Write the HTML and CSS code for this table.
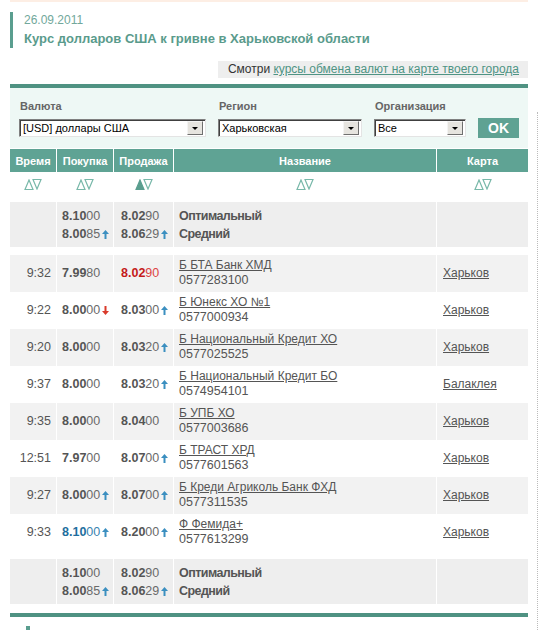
FILE: index.html
```html
<!DOCTYPE html>
<html>
<head>
<meta charset="utf-8">
<link rel="stylesheet" href="styles.css">
</head>
<body>
<div class="page">
  <div class="main">
    <div class="strip"></div>
    <div class="heading">
      <div class="date">26.09.2011</div>
      <h1 class="title">Курс долларов США к гривне в Харьковской области</h1>
    </div>
    <div class="seebar"><span class="see">Смотри <a href="#">курсы обмена валют на карте твоего города</a></span></div>
    <div class="topbar"></div>
    <div class="filters">
      <div class="field">
        <label>Валюта</label>
        <div class="select w-cur"><span>[USD] доллары США</span><i class="dd"></i></div>
      </div>
      <div class="field">
        <label>Регион</label>
        <div class="select w-reg"><span>Харьковская</span><i class="dd"></i></div>
      </div>
      <div class="field">
        <label>Организация</label>
        <div class="select w-org"><span>Все</span><i class="dd"></i></div>
      </div>
      <button class="ok">OK</button>
    </div>
    <table class="rates">
      <colgroup>
        <col class="k1"><col class="k2"><col class="k3"><col class="k4"><col class="k5">
      </colgroup>
      <thead>
        <tr><th>Время</th><th>Покупка</th><th>Продажа</th><th>Название</th><th>Карта</th></tr>
      </thead>
      <tbody>
        <tr class="sort">
          <td><svg class="srt" width="18" height="11" viewBox="0 0 18 11"><path d="M1 10.5 L5 1 L9 10.5 Z"/><path d="M9 0.5 L17 0.5 L13 10 Z"/></svg></td>
          <td><svg class="srt" width="18" height="11" viewBox="0 0 18 11"><path d="M1 10.5 L5 1 L9 10.5 Z"/><path d="M9 0.5 L17 0.5 L13 10 Z"/></svg></td>
          <td><svg class="srt" width="18" height="11" viewBox="0 0 18 11"><path class="on" d="M1 10.5 L5 1 L9 10.5 Z"/><path d="M9 0.5 L17 0.5 L13 10 Z"/></svg></td>
          <td><svg class="srt" width="18" height="11" viewBox="0 0 18 11"><path d="M1 10.5 L5 1 L9 10.5 Z"/><path d="M9 0.5 L17 0.5 L13 10 Z"/></svg></td>
          <td><svg class="srt" width="18" height="11" viewBox="0 0 18 11"><path d="M1 10.5 L5 1 L9 10.5 Z"/><path d="M9 0.5 L17 0.5 L13 10 Z"/></svg></td>
        </tr>
        <tr class="gap g1"><td colspan="5"></td></tr>
        <tr class="summary">
          <td class="c-time"></td>
          <td class="c-buy"><div><b>8.10</b>00</div><div><b>8.00</b>85<svg class="up" width="7" height="9" viewBox="0 0 7 9"><path d="M3.5 0 L7 4 H4.5 V9 H2.5 V4 H0 Z"/></svg></div></td>
          <td class="c-sell"><div><b>8.02</b>90</div><div><b>8.06</b>29<svg class="up" width="7" height="9" viewBox="0 0 7 9"><path d="M3.5 0 L7 4 H4.5 V9 H2.5 V4 H0 Z"/></svg></div></td>
          <td class="c-name"><div class="lbl">Оптимальный</div><div class="lbl">Средний</div></td>
          <td class="c-map"></td>
        </tr>
        <tr class="gap g2"><td colspan="5"></td></tr>
        <tr class="row alt">
          <td class="c-time">9:32</td>
          <td class="c-buy"><b>7.99</b>80</td>
          <td class="c-sell red"><b>8.02</b>90</td>
          <td class="c-name"><a href="#">Б БТА Банк ХМД</a><br>0577283100</td>
          <td class="c-map"><a href="#">Харьков</a></td>
        </tr>
        <tr class="row">
          <td class="c-time">9:22</td>
          <td class="c-buy"><b>8.00</b>00<svg class="down" width="7" height="9" viewBox="0 0 7 9"><path d="M3.5 9 L7 5 H4.5 V0 H2.5 V5 H0 Z"/></svg></td>
          <td class="c-sell"><b>8.03</b>00<svg class="up" width="7" height="9" viewBox="0 0 7 9"><path d="M3.5 0 L7 4 H4.5 V9 H2.5 V4 H0 Z"/></svg></td>
          <td class="c-name"><a href="#">Б Юнекс ХО №1</a><br>0577000934</td>
          <td class="c-map"><a href="#">Харьков</a></td>
        </tr>
        <tr class="row alt">
          <td class="c-time">9:20</td>
          <td class="c-buy"><b>8.00</b>00</td>
          <td class="c-sell"><b>8.03</b>20<svg class="up" width="7" height="9" viewBox="0 0 7 9"><path d="M3.5 0 L7 4 H4.5 V9 H2.5 V4 H0 Z"/></svg></td>
          <td class="c-name"><a href="#">Б Национальный Кредит ХО</a><br>0577025525</td>
          <td class="c-map"><a href="#">Харьков</a></td>
        </tr>
        <tr class="row">
          <td class="c-time">9:37</td>
          <td class="c-buy"><b>8.00</b>00</td>
          <td class="c-sell"><b>8.03</b>20<svg class="up" width="7" height="9" viewBox="0 0 7 9"><path d="M3.5 0 L7 4 H4.5 V9 H2.5 V4 H0 Z"/></svg></td>
          <td class="c-name"><a href="#">Б Национальный Кредит БО</a><br>0574954101</td>
          <td class="c-map"><a href="#">Балаклея</a></td>
        </tr>
        <tr class="row alt">
          <td class="c-time">9:35</td>
          <td class="c-buy"><b>8.00</b>00</td>
          <td class="c-sell"><b>8.04</b>00</td>
          <td class="c-name"><a href="#">Б УПБ ХО</a><br>0577003686</td>
          <td class="c-map"><a href="#">Харьков</a></td>
        </tr>
        <tr class="row">
          <td class="c-time">12:51</td>
          <td class="c-buy"><b>7.97</b>00</td>
          <td class="c-sell"><b>8.07</b>00<svg class="up" width="7" height="9" viewBox="0 0 7 9"><path d="M3.5 0 L7 4 H4.5 V9 H2.5 V4 H0 Z"/></svg></td>
          <td class="c-name"><a href="#">Б ТРАСТ ХРД</a><br>0577601563</td>
          <td class="c-map"><a href="#">Харьков</a></td>
        </tr>
        <tr class="row alt">
          <td class="c-time">9:27</td>
          <td class="c-buy"><b>8.00</b>00<svg class="up" width="7" height="9" viewBox="0 0 7 9"><path d="M3.5 0 L7 4 H4.5 V9 H2.5 V4 H0 Z"/></svg></td>
          <td class="c-sell"><b>8.07</b>00<svg class="up" width="7" height="9" viewBox="0 0 7 9"><path d="M3.5 0 L7 4 H4.5 V9 H2.5 V4 H0 Z"/></svg></td>
          <td class="c-name"><a href="#">Б Креди Агриколь Банк ФХД</a><br>0577311535</td>
          <td class="c-map"><a href="#">Харьков</a></td>
        </tr>
        <tr class="row">
          <td class="c-time">9:33</td>
          <td class="c-buy blue"><b>8.10</b>00<svg class="up" width="7" height="9" viewBox="0 0 7 9"><path d="M3.5 0 L7 4 H4.5 V9 H2.5 V4 H0 Z"/></svg></td>
          <td class="c-sell"><b>8.20</b>00<svg class="up" width="7" height="9" viewBox="0 0 7 9"><path d="M3.5 0 L7 4 H4.5 V9 H2.5 V4 H0 Z"/></svg></td>
          <td class="c-name"><a href="#">Ф Фемида+</a><br>0577613299</td>
          <td class="c-map"><a href="#">Харьков</a></td>
        </tr>
        <tr class="gap g2"><td colspan="5"></td></tr>
        <tr class="summary">
          <td class="c-time"></td>
          <td class="c-buy"><div><b>8.10</b>00</div><div><b>8.00</b>85<svg class="up" width="7" height="9" viewBox="0 0 7 9"><path d="M3.5 0 L7 4 H4.5 V9 H2.5 V4 H0 Z"/></svg></div></td>
          <td class="c-sell"><div><b>8.02</b>90</div><div><b>8.06</b>29<svg class="up" width="7" height="9" viewBox="0 0 7 9"><path d="M3.5 0 L7 4 H4.5 V9 H2.5 V4 H0 Z"/></svg></div></td>
          <td class="c-name"><div class="lbl">Оптимальный</div><div class="lbl">Средний</div></td>
          <td class="c-map"></td>
        </tr>
      </tbody>
    </table>
    <div class="bottombar"></div>
    <div class="next"></div>
  </div>
  <div class="side"></div>
</div>
</body>
</html>
```
FILE: styles.css
```css
* { box-sizing: border-box; }
body {
  margin: 0;
  font-family: "Liberation Sans", Arial, sans-serif;
  color: #555;
  background: #fff;
}
.page { display: flex; }
.main { width: 518px; margin-left: 10px; }
.side {
  margin-left: 9px;
  margin-top: 112px;
  width: 1px;
  border-left: 1px dotted #bbb;
}
.strip { height: 2px; background: #fdeee4; }
.heading {
  margin-top: 10px;
  border-left: 3px solid #5a9e8f;
  padding-left: 11px;
}
.date { font-size: 12px; line-height: 17px; color: #72a89b; }
.title {
  margin: 0;
  font-size: 13px;
  line-height: 19px;
  font-weight: bold;
  color: #5a9b8c;
}
.seebar { display: flex; justify-content: flex-end; margin-top: 13px; }
.see {
  background: #eee;
  padding: 0 9px 0 10px;
  font-size: 12px;
  line-height: 17px;
  color: #333;
}
.see a { color: #4f9484; }
.topbar { height: 4px; background: #4f9282; margin-top: 6px; }
.filters {
  background: #eef8f5;
  display: flex;
  align-items: flex-end;
  gap: 12px;
  padding: 11px 9px 11px 9px;
}
.field { display: flex; flex-direction: column; }
.field label {
  font-size: 11px;
  font-weight: bold;
  color: #666;
  line-height: 14px;
  margin-bottom: 6px;
  padding-left: 1px;
}
.select {
  height: 18px;
  background: #fff;
  border: 1px solid;
  border-color: #808080 #e4e4e4 #e4e4e4 #808080;
  box-shadow: inset 1px 1px 0 #404040;
  display: flex;
  align-items: center;
  justify-content: space-between;
  padding: 0 2px 0 3px;
  font-size: 11px;
  color: #000;
}
.w-cur { width: 187px; }
.w-reg { width: 144px; }
.w-org { width: 92px; }
.dd {
  width: 16px;
  height: 14px;
  background: #e6e4df;
  border: 1px solid;
  border-color: #f4f4f4 #6f6f6f #6f6f6f #f4f4f4;
  position: relative;
}
.dd::after {
  content: "";
  position: absolute;
  left: 4px;
  top: 5px;
  border-left: 3px solid transparent;
  border-right: 3px solid transparent;
  border-top: 3px solid #000;
}
.ok {
  width: 41px;
  height: 20px;
  margin-bottom: -1px;
  background: #5fa293;
  color: #fff;
  border: 0;
  font-family: "Liberation Sans", Arial, sans-serif;
  font-weight: bold;
  font-size: 14px;
  padding: 0;
}
.rates {
  width: 518px;
  margin-top: 1px;
  table-layout: fixed;
  border-collapse: separate;
  border-spacing: 0;
  font-size: 12.5px;
}
.k1 { width: 47px; }
.k2 { width: 57px; }
.k3 { width: 60px; }
.k4 { width: 263px; }
.k5 { width: 91px; }
.rates th {
  background: #5fa394;
  color: #fff;
  font-size: 11px;
  font-weight: bold;
  height: 23px;
  padding: 0;
  text-align: center;
  border-right: 1px solid #fff;
}
.rates th:last-child, .rates td:last-child { border-right: 0; }
.rates td {
  padding: 0;
  border-right: 1px solid #fff;
  vertical-align: middle;
}
.sort td { height: 23px; text-align: center; padding-top: 1px; }
.srt { display: inline-block; vertical-align: middle; stroke: #78b8a9; stroke-width: 1.2; fill: none; }
.srt .on { fill: #5a9e8f; stroke: #5a9e8f; }
.gap td { border-right: 0; }
.g1 td { height: 7px; }
.g2 td { height: 8px; }
.summary td {
  background: #eee;
  line-height: 18px;
  padding-top: 4px;
  padding-bottom: 4px;
  height: 45px;
}
.lbl { font-weight: bold; font-size: 12.5px; letter-spacing: -0.55px; color: #555; }
.row td { height: 37px; line-height: 15px; padding-top: 3px; padding-bottom: 4px; }
.row.alt td { background: #f2f2f2; }
.c-time { text-align: right; padding-right: 5px !important; }
.c-buy { padding-left: 5px !important; white-space: nowrap; }
.c-sell { padding-left: 7px !important; white-space: nowrap; }
.c-name { padding-left: 5px !important; }
.c-map { padding-left: 6px !important; }
b { font-weight: bold; color: #555; }
.c-buy, .c-sell { color: #6a6a6a; }
.red, .red b { color: #c41a1a; }
.red { color: #d44; }
.blue b { color: #1e6e9e; }
.blue { color: #3a84b0; }
.rates a { color: #555; text-decoration: underline; font-size: 12px; }
.up, .down { display: inline-block; margin-left: 2px; vertical-align: -1px; }
.up { fill: #3b8fc0; }
.down { fill: #d93a2b; }
.bottombar { height: 4px; background: #4f9282; margin-top: 9px; }
.next {
  margin-top: 9px;
  margin-left: 16px;
  height: 20px;
  border-left: 4px solid #5a9e8f;
}
```
